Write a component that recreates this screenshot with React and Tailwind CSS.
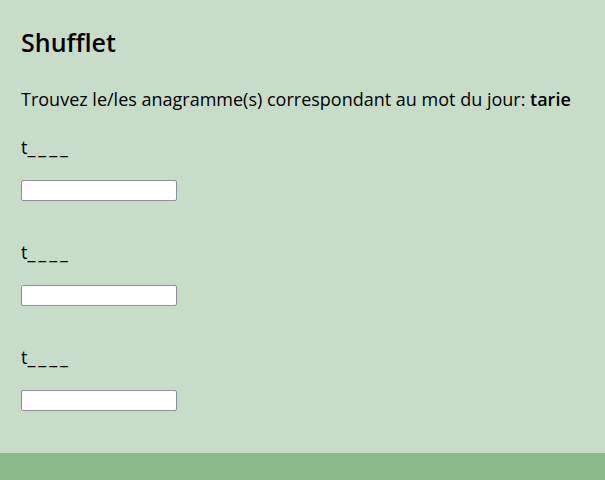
import React from 'react';

const words = ['t', 't', 't'];

export default function App() {
  return (
    <div className="min-h-[480px] flex flex-col bg-[#c8ddc8] text-black" style={{ fontFamily: '"Open Sans", "Noto Sans", sans-serif' }}>
      <main className="flex-1 px-[21px] pt-[26px]">
        <h1 className="text-[25px] font-semibold leading-[32px]">Shufflet</h1>
        <p className="mt-[27px] text-[18px] leading-[28px] whitespace-nowrap">
          Trouvez le/les anagramme(s) correspondant au mot du jour: <span className="font-semibold">tarie</span>
        </p>
        <div className="mt-[20px] flex flex-col gap-[37px]">
          {words.map((w, i) => (
            <div key={i}>
              <div className="text-[18px] leading-[28px]">
                {w}
                <span className="tracking-[3px]">____</span>
              </div>
              <input type="text" className="mt-[19px] block w-[156px] h-[21px] bg-white border border-[#8f8f9d] rounded-[2px]" />
            </div>
          ))}
        </div>
      </main>
      <footer className="h-[27px] bg-[#8dba8d]" />
    </div>
  );
}
